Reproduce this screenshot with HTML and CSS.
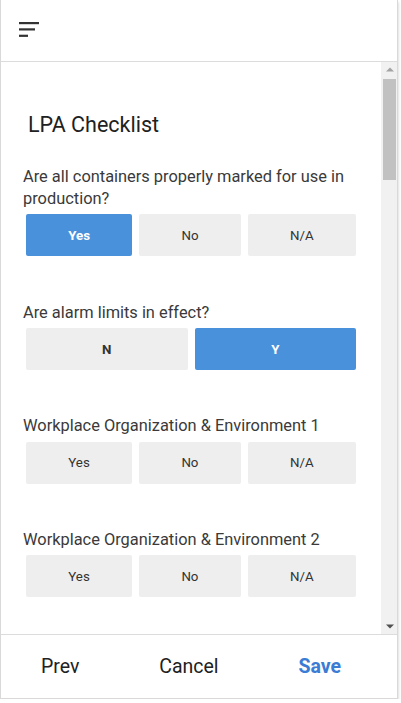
FILE: index.html
```html
<!DOCTYPE html>
<html lang="en">
<head>
<meta charset="utf-8">
<title>LPA Checklist</title>
<link rel="stylesheet" href="styles.css">
</head>
<body>
<div class="card">
  <header class="header">
    <button class="menu-btn" aria-label="Menu">
      <svg width="24" height="20" viewBox="0 0 24 20" aria-hidden="true">
        <rect x="0" y="2" width="20" height="2.2" fill="#333"/>
        <rect x="0" y="8.3" width="16" height="2.2" fill="#333"/>
        <rect x="0" y="14.7" width="9" height="2.2" fill="#333"/>
      </svg>
    </button>
  </header>

  <div class="body-row">
    <main class="scroller">
      <div class="content">
        <h1 class="title">LPA Checklist</h1>

        <section class="question">
          <p class="q-text">Are all containers properly marked for use in production?</p>
          <div class="answers">
            <button class="opt opt--selected">Yes</button>
            <button class="opt">No</button>
            <button class="opt">N/A</button>
          </div>
        </section>

        <section class="question">
          <p class="q-text">Are alarm limits in effect?</p>
          <div class="answers">
            <button class="opt opt--bold opt--even">N</button>
            <button class="opt opt--bold opt--even opt--selected">Y</button>
          </div>
        </section>

        <section class="question">
          <p class="q-text">Workplace Organization &amp; Environment 1</p>
          <div class="answers">
            <button class="opt">Yes</button>
            <button class="opt">No</button>
            <button class="opt">N/A</button>
          </div>
        </section>

        <section class="question">
          <p class="q-text">Workplace Organization &amp; Environment 2</p>
          <div class="answers">
            <button class="opt">Yes</button>
            <button class="opt">No</button>
            <button class="opt">N/A</button>
          </div>
        </section>
      </div>
    </main>

    <div class="scrollbar" aria-hidden="true">
      <div class="sb-btn">
        <svg width="8" height="5" viewBox="0 0 8 5"><path d="M0 4.5 L4 0.5 L8 4.5 Z" fill="#a3a3a3"/></svg>
      </div>
      <div class="sb-thumb"></div>
      <div class="sb-spacer"></div>
      <div class="sb-btn">
        <svg width="8" height="5" viewBox="0 0 8 5"><path d="M0 0.5 L8 0.5 L4 4.5 Z" fill="#505050"/></svg>
      </div>
    </div>
  </div>

  <footer class="footer">
    <button class="foot-btn">Prev</button>
    <button class="foot-btn">Cancel</button>
    <button class="foot-btn foot-btn--primary">Save</button>
  </footer>
</div>
</body>
</html>
```

FILE: styles.css
```css
* {
  box-sizing: border-box;
}

html, body {
  margin: 0;
  padding: 0;
  background: #ffffff;
}

body {
  font-family: Roboto, "Liberation Sans", Arial, sans-serif;
  color: #333333;
}

button {
  font-family: inherit;
  cursor: pointer;
}

.card {
  width: 398px;
  height: 699px;
  display: flex;
  flex-direction: column;
  background: #ffffff;
  border-left: 1px solid #d9d9d9;
  border-right: 1px solid #d9d9d9;
  border-bottom: 1px solid #d9d9d9;
  box-shadow: 0 2px 3px rgba(0, 0, 0, 0.22);
}

.header {
  flex: 0 0 auto;
  height: 62px;
  border-bottom: 1px solid #dcdcdc;
  display: flex;
  align-items: center;
  padding-left: 18px;
}

.menu-btn {
  border: none;
  background: none;
  padding: 0;
  width: 24px;
  height: 20px;
  display: block;
  margin-top: -1px;
}

.menu-btn svg {
  display: block;
}

.body-row {
  flex: 1 1 auto;
  min-height: 0;
  display: flex;
}

.scroller {
  flex: 1 1 auto;
  min-width: 0;
  overflow: hidden;
}

.scrollbar {
  flex: 0 0 16px;
  background: #f1f1f1;
  display: flex;
  flex-direction: column;
}

.sb-btn {
  height: 15px;
  display: flex;
  align-items: center;
  justify-content: center;
  padding-left: 1px;
}

.sb-btn svg {
  display: block;
}

.sb-thumb {
  height: 101px;
  margin: 2px 1px 0 2px;
  background: #c1c1c1;
}

.sb-spacer {
  flex: 1 1 auto;
}

.content {
  padding: 49px 22px 0 22px;
}

.title {
  margin: 0 0 26.5px 0;
  padding-left: 5px;
  font-size: 21.5px;
  line-height: 28px;
  font-weight: 400;
  color: #212121;
}

.question {
  margin-bottom: 45.3px;
}

.q-text {
  margin: 0 0 4px 0;
  font-size: 16.4px;
  line-height: 22.4px;
  color: #3a3a3a;
}

.answers {
  display: flex;
  gap: 7px;
  margin: 0 3px;
}

.opt {
  flex: 1 1 auto;
  height: 42px;
  border: none;
  border-radius: 2px;
  background: #eeeeee;
  color: #333333;
  font-size: 13.3px;
  font-weight: 400;
  padding: 0 6px;
}

.opt--even {
  flex: 1 1 0;
}

.opt--bold {
  font-weight: 700;
}

.opt--selected {
  background: #4a91dc;
  color: #ffffff;
  font-weight: 700;
}

.footer {
  flex: 0 0 auto;
  height: 64px;
  border-top: 1px solid #dcdcdc;
  display: flex;
  align-items: center;
  justify-content: space-around;
  padding-right: 16px;
}

.foot-btn {
  border: none;
  background: none;
  padding: 0;
  font-size: 19.5px;
  line-height: 24px;
  color: #212121;
}

.foot-btn--primary {
  color: #3b7cd4;
  font-weight: 700;
}
```
